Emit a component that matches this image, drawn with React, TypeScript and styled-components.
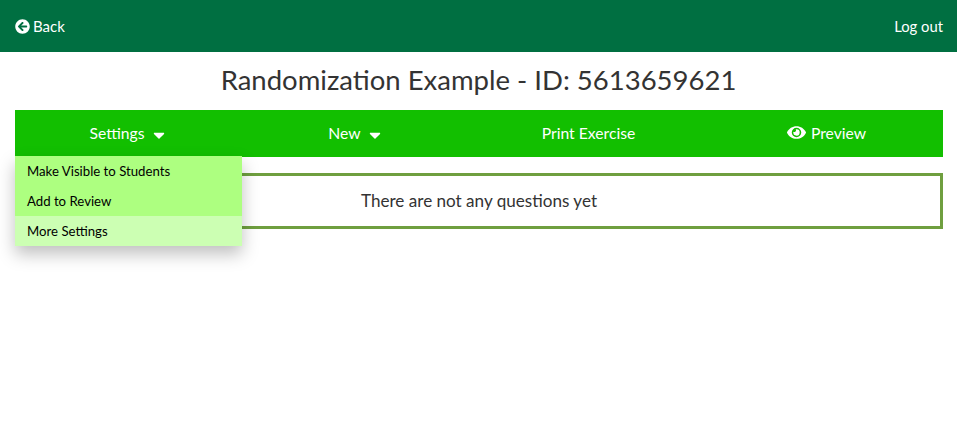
import styled, { createGlobalStyle } from "styled-components";
import { FaArrowCircleLeft, FaCaretDown, FaEye } from "react-icons/fa";

const GlobalStyle = createGlobalStyle`
  html, body {
    margin: 0;
    padding: 0;
    background: #fff;
    font-family: "Lato", "Noto Sans", sans-serif;
    color: #333;
  }
`;

const Page = styled.div`
  display: flex;
  flex-direction: column;
  min-height: 100vh;
`;

const Header = styled.header`
  display: flex;
  align-items: center;
  justify-content: space-between;
  height: 52px;
  padding: 0 14px 0 15px;
  background: #006f41;
  color: #fff;
  font-size: 15px;
`;

const BackLink = styled.a`
  display: flex;
  align-items: center;
  gap: 3px;
  color: #fff;
  cursor: pointer;
`;

const LogOut = styled.a`
  font-size: 14.8px;
  color: #fff;
  cursor: pointer;
`;

const Title = styled.h1`
  margin: 0;
  height: 58px;
  line-height: 55px;
  text-align: center;
  font-size: 27.5px;
  font-weight: 400;
  color: #333;
`;

const Content = styled.main`
  position: relative;
  flex: 1;
  padding: 0 14px 0 15px;
`;

const Nav = styled.nav`
  display: grid;
  grid-template-columns: 227px 228px 237px 1fr;
  height: 47px;
  background: #12bf00;
  margin-bottom: 16px;
`;

const NavItem = styled.div<{ $offset?: number }>`
  display: flex;
  align-items: center;
  justify-content: center;
  gap: 5px;
  padding-bottom: 2px;
  padding-left: ${({ $offset }) => $offset ?? 0}px;
  color: #fff;
  font-size: 15.7px;
  cursor: pointer;
`;

const Caret = styled(FaCaretDown)`
  margin-top: 5px;
  font-size: 18px;
`;

const Dropdown = styled.ul`
  position: absolute;
  z-index: 2;
  top: 46px;
  left: 15px;
  width: 227px;
  margin: 0;
  padding: 0;
  list-style: none;
  box-shadow: 0 8px 16px rgba(0, 0, 0, 0.25);
`;

const DropdownItem = styled.li<{ $active?: boolean }>`
  height: 30px;
  line-height: 30px;
  padding-left: 12px;
  font-size: 13.2px;
  color: #000;
  background: ${({ $active }) => ($active ? "#ccffb3" : "#adff80")};
`;

const EmptyBox = styled.div`
  box-sizing: border-box;
  height: 56px;
  line-height: 50px;
  text-align: center;
  font-size: 17.1px;
  color: #333;
  border: 3px solid #6f9f3f;
`;

export default function App() {
  return (
    <Page>
      <GlobalStyle />
      <Header>
        <BackLink>
          <FaArrowCircleLeft size={15} />
          Back
        </BackLink>
        <LogOut>Log out</LogOut>
      </Header>
      <Title>Randomization Example - ID: 5613659621</Title>
      <Content>
        <Nav>
          <NavItem>
            Settings <Caret />
          </NavItem>
          <NavItem>
            New <Caret />
          </NavItem>
          <NavItem>Print Exercise</NavItem>
          <NavItem $offset={3}>
            <FaEye size={19} />
            Preview
          </NavItem>
        </Nav>
        <Dropdown>
          <DropdownItem>Make Visible to Students</DropdownItem>
          <DropdownItem>Add to Review</DropdownItem>
          <DropdownItem $active>More Settings</DropdownItem>
        </Dropdown>
        <EmptyBox>There are not any questions yet</EmptyBox>
      </Content>
    </Page>
  );
}
